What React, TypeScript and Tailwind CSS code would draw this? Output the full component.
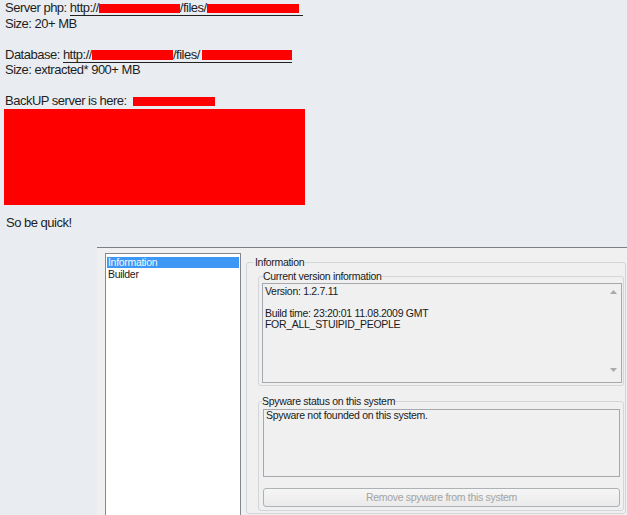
import React from "react";

function Red({ w, h = 9, extra = "" }: { w: number; h?: number; extra?: string }) {
  return (
    <span
      className={`inline-block bg-[#ff0000] align-[-1px] ${extra}`}
      style={{ width: w, height: h }}
    />
  );
}

export default function App() {
  return (
    <div className="w-[627px] h-[515px] overflow-hidden bg-[#e9edf1] font-['Liberation_Sans',Arial,sans-serif] text-[#1e1e1e]">
      <div className="pl-[5px] text-[13px] leading-[15.5px] tracking-[-0.5px] whitespace-nowrap">
        <div>
          Server php:{" "}
          <span className="border-b border-[#222]">
            http://
            <Red w={81} />
            /files/
            <Red w={92} />
            <span className="inline-block w-[4px]" />
          </span>
        </div>
        <div>Size: 20+ MB</div>
        <div className="h-[15.5px]" />
        <div>
          Database:{" "}
          <span className="border-b border-[#222]">
            http://
            <Red w={81} h={10} />
            /files/
            <Red w={90} h={10} extra="ml-[2px]" />
          </span>
        </div>
        <div>Size: extracted* 900+ MB</div>
        <div className="h-[15.5px]" />
        <div>
          BackUP server is here: <Red w={82} extra="ml-[3px]" />
        </div>
      </div>
      <div className="ml-[4px] mt-[0.5px] w-[301px] h-[96px] bg-[#ff0000]" />
      <div className="pl-[6px] mt-[10px] text-[13px] leading-[16px] tracking-[-0.5px]">So be quick!</div>

      <div className="mt-[16px] ml-[97px] h-[300px] border-t border-[#7d8185] bg-[#f0f0f0] flex font-['Liberation_Sans',Arial,sans-serif] text-[10.5px] tracking-[-0.3px] text-[#1a1a1a]">
        <div className="ml-[8px] mt-[5px] w-[136px] h-[300px] border border-[#828790] bg-white pt-[3px]">
          <div className="mx-[1px] h-[11px] leading-[11px] bg-[#3d97f5] text-[#f4f8ff] pl-[1px]">Information</div>
          <div className="h-[13px] leading-[13px] pl-[2px]">Builder</div>
        </div>

        <div className="ml-[5px] mr-[1px] flex-1">
          <fieldset className="mt-[8px] border border-[#d3d6d9] rounded-[3px]">
            <legend className="ml-[7px] px-[1px] leading-[12px]">Information</legend>
            <div className="pl-[11px] pr-[1px] pb-[2px]">
              <fieldset className="mt-[2px] border border-[#d3d6d9] rounded-[3px]">
                <legend className="ml-[4px] leading-[12px]">Current version information</legend>
                <div className="pl-[3px] pr-[1px] pb-[2px]">
                  <div className="mt-[1px] h-[100px] border border-[#a5a9ae] bg-[#f0f0f0] flex">
                    <div className="flex-1 pl-[2px] pt-[2px] leading-[11px]">
                      <div>Version: 1.2.7.11</div>
                      <div className="h-[11px]" />
                      <div>Build time: 23:20:01 11.08.2009 GMT</div>
                      <div>FOR_ALL_STUIPID_PEOPLE</div>
                    </div>
                    <div className="w-[16px] flex flex-col justify-between items-center pt-[6px] pb-[10px]">
                      <svg width="7" height="4" viewBox="0 0 7 4">
                        <path d="M0 4 L3.5 0 L7 4 Z" fill="#a9a9a9" />
                      </svg>
                      <svg width="7" height="4" viewBox="0 0 7 4">
                        <path d="M0 0 L3.5 4 L7 0 Z" fill="#a9a9a9" />
                      </svg>
                    </div>
                  </div>
                </div>
              </fieldset>

              <fieldset className="mt-[9px] border border-[#d3d6d9] rounded-[3px]">
                <legend className="ml-[3px] leading-[12px]">Spyware status on this system</legend>
                <div className="pl-[4px] pr-[3px] pb-[3px]">
                  <div className="mt-[2px] h-[68px] border border-[#a5a9ae] bg-[#f0f0f0] pl-[2px] leading-[11px]">
                    Spyware not founded on this system.
                  </div>
                  <div className="mt-[11px] h-[19px] border border-[#adb2b5] rounded-[3px] bg-linear-to-b from-[#f6f6f6] to-[#eaeaea] text-[#a3a3a3] flex items-center justify-center">
                    Remove spyware from this system
                  </div>
                </div>
              </fieldset>
            </div>
          </fieldset>
        </div>
      </div>
    </div>
  );
}
